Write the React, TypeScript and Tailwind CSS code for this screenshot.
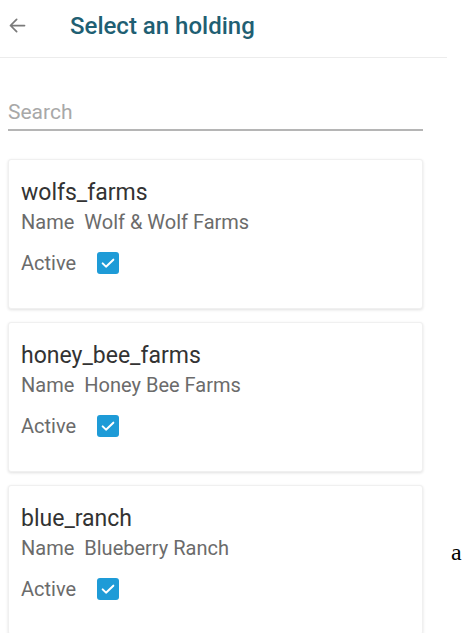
const holdings = [
  { id: "wolfs_farms", name: "Wolf & Wolf Farms" },
  { id: "honey_bee_farms", name: "Honey Bee Farms" },
  { id: "blue_ranch", name: "Blueberry Ranch" },
];

function CheckBox() {
  return (
    <div className="w-[22px] h-[22px] rounded-[3px] bg-[#1e9bd7] flex items-center justify-center">
      <svg width="16" height="16" viewBox="0 0 24 24" fill="none" stroke="white" strokeWidth="3" strokeLinecap="round" strokeLinejoin="round">
        <path d="M4 12.5l5 5L20 7" />
      </svg>
    </div>
  );
}

export default function App() {
  return (
    <div className="relative w-[465px] h-[633px] overflow-hidden bg-white font-['Roboto',sans-serif]">
      <div className="w-[447px] h-[58px] border-b border-[#ececec] flex items-center pb-[6px]">
        <div className="w-[70px] pl-[7px] flex items-center">
          <svg width="21" height="21" viewBox="0 0 24 24" fill="none" stroke="#7a7a7a" strokeWidth="2" strokeLinecap="round" strokeLinejoin="round">
            <path d="M20 12H4M11 5l-7 7 7 7" />
          </svg>
        </div>
        <div className="text-[24px] font-medium text-[#1f5f73] leading-[30px]">Select an holding</div>
      </div>

      <div className="mt-[40px] ml-2 w-[415px] border-b-2 border-[#b5b5b5] pb-[3px]">
        <div className="text-[21px] text-[#a8a8a8] leading-[28px]">Search</div>
      </div>

      <div className="mt-[28px] ml-2 w-[415px] flex flex-col gap-[13px]">
        {holdings.map(h => (
          <div key={h.id} className="h-[150px] rounded-[3px] bg-white shadow-[0_1px_3px_rgba(0,0,0,0.12)] border border-[#f0f0f0] pl-3 pt-[18px]">
            <div className="text-[23px] text-[#333] leading-[30px]">{h.id}</div>
            <div className="text-[20px] text-[#6b6b6b] leading-[28px] flex gap-[10px]">
              <span>Name</span>
              <span>{h.name}</span>
            </div>
            <div className="mt-[12px] flex items-center gap-[21px]">
              <span className="text-[20px] text-[#6b6b6b] leading-[30px]">Active</span>
              <CheckBox />
            </div>
          </div>
        ))}
      </div>

      <div className="absolute left-[451px] top-[534px] text-[24px] text-black font-['Liberation_Serif',serif]">a</div>
    </div>
  );
}
